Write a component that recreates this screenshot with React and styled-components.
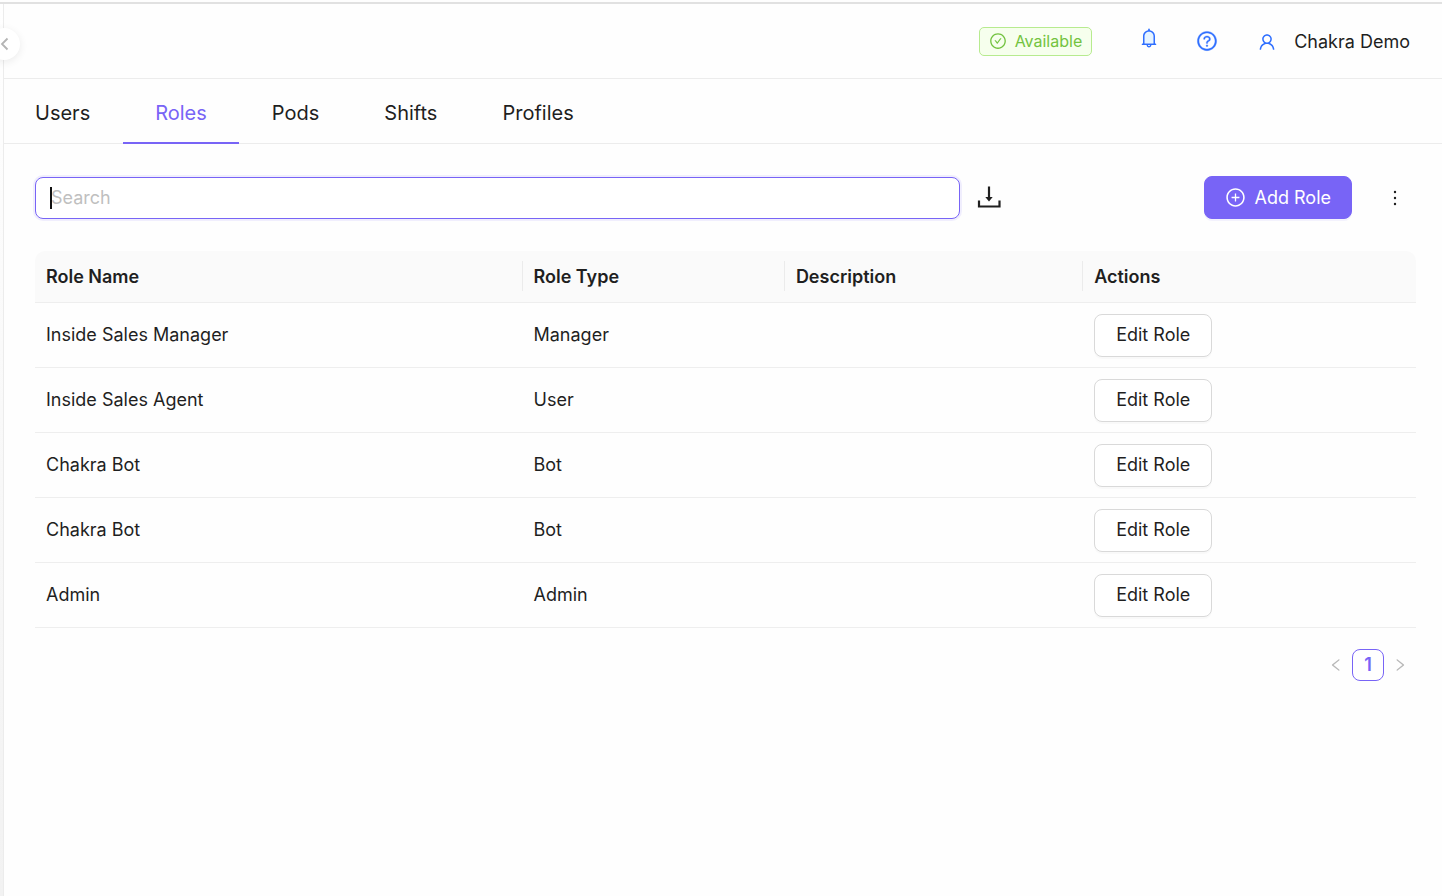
import React, { useState } from 'react';
import styled, { createGlobalStyle } from 'styled-components';
import {
  AiOutlineCheckCircle,
  AiOutlineLeft,
  AiOutlineMore,
  AiOutlinePlusCircle,
  AiOutlineQuestionCircle,
  AiOutlineRight,
  AiOutlineUser,
} from 'react-icons/ai';

const GlobalStyle = createGlobalStyle`
  *, *::before, *::after {
    box-sizing: border-box;
  }
  body {
    margin: 0;
    padding-top: 2px;
    background: #fefefe;
    color: #1f1f1f;
    font-family: Inter, "Liberation Sans", sans-serif;
    font-size: 18px;
    line-height: 28px;
  }
  button, input {
    font: inherit;
    color: inherit;
  }
  svg {
    display: block;
    flex: none;
  }
`;

const Shell = styled.div`
  display: flex;
  min-height: calc(100vh - 2px);
  border-top: 2px solid #e1e1e1;
  position: relative;
`;

const SideEdge = styled.aside`
  width: 4px;
  flex: none;
  border-right: 1px solid #ececec;
  background: linear-gradient(#ffffff, #f2f2f2);
`;

const CollapseButton = styled.button`
  position: absolute;
  top: 24px;
  left: -12px;
  width: 32px;
  height: 32px;
  padding: 0;
  border: none;
  border-radius: 50%;
  background: #ffffff;
  color: #b4b4b4;
  box-shadow: 0 2px 8px rgba(0, 0, 0, 0.08);
  display: flex;
  align-items: center;
  justify-content: center;
  cursor: pointer;
`;

const Main = styled.main`
  flex: 1;
  min-width: 0;
`;

const TopBar = styled.header`
  height: 75px;
  padding: 0 32px;
  border-bottom: 1px solid #ececec;
  display: flex;
  align-items: center;
  justify-content: flex-end;
`;

const StatusTag = styled.span`
  height: 29px;
  padding: 0 9px;
  margin-right: 46px;
  border: 1px solid #b7eb8f;
  border-radius: 5px;
  background: #f6ffed;
  color: #73c340;
  font-size: 16px;
  display: flex;
  align-items: center;
  gap: 8px;
`;

const IconButton = styled.button`
  padding: 0;
  margin-right: ${(props) => props.$gap || 0}px;
  border: none;
  background: none;
  color: ${(props) => props.$color || '#1f1f1f'};
  display: flex;
  align-items: center;
  cursor: pointer;
`;

const BellButton = styled(IconButton)`
  padding-bottom: 6px;
`;

const MoreButton = styled(IconButton)`
  margin: 0 10px 0 32px;
`;

const Account = styled.button`
  padding: 2px 0 0;
  border: none;
  background: none;
  display: flex;
  align-items: center;
  gap: 17px;
  cursor: pointer;

  svg {
    color: #2f6fff;
  }
`;

const Tabs = styled.nav`
  height: 65px;
  margin-left: -1px;
  border-bottom: 1px solid #ececec;
  display: flex;
  gap: 1px;
`;

const Tab = styled.button`
  height: 65px;
  padding: 4px 32px 0;
  border: none;
  border-bottom: 2px solid ${(props) => (props.$active ? '#7864f6' : 'transparent')};
  background: none;
  color: ${(props) => (props.$active ? '#7864f6' : '#1f1f1f')};
  font-size: 20px;
  cursor: pointer;
`;

const Content = styled.section`
  padding: 32px 26px 32px 31px;
`;

const Toolbar = styled.div`
  display: flex;
  align-items: center;
  margin-bottom: 32px;
`;

const SearchField = styled.label`
  position: relative;
  width: 67%;
  margin-right: 17px;
  display: flex;
`;

const SearchInput = styled.input`
  width: 100%;
  height: 42px;
  padding: 0 15px;
  border: 1px solid #7864f6;
  border-radius: 8px;
  outline: none;
  background: #ffffff;
  box-shadow: 0 0 0 2px rgba(120, 100, 246, 0.1);
  caret-color: transparent;

  &::placeholder {
    color: #bfbfbf;
    opacity: 1;
  }
`;

const Caret = styled.span`
  position: absolute;
  top: 10px;
  left: 15px;
  width: 2px;
  height: 22px;
  background: #111111;
`;

const Spacer = styled.div`
  flex: 1;
`;

const Button = styled.button`
  height: 43px;
  padding: 0 ${(props) => (props.$primary ? 20 : 21)}px;
  border: 1px solid ${(props) => (props.$primary ? '#7864f6' : '#d9d9d9')};
  border-radius: 8px;
  background: ${(props) => (props.$primary ? '#7864f6' : '#ffffff')};
  color: ${(props) => (props.$primary ? '#ffffff' : '#1f1f1f')};
  box-shadow: 0 2px 0 ${(props) => (props.$primary ? 'rgba(120, 100, 246, 0.08)' : 'rgba(0, 0, 0, 0.02)')};
  white-space: nowrap;
  display: inline-flex;
  align-items: center;
  gap: 9px;
  vertical-align: top;
  cursor: pointer;
`;

const Table = styled.table`
  width: 100%;
  table-layout: fixed;
  border-collapse: separate;
  border-spacing: 0;
`;

const HeadCell = styled.th`
  position: relative;
  width: ${(props) => props.$width};
  height: 52px;
  padding: 0 11px;
  border-bottom: 1px solid #eeeeee;
  background: #fafafa;
  font-weight: 600;
  text-align: left;

  &:first-child {
    border-top-left-radius: 10px;
  }
  &:last-child {
    border-top-right-radius: 10px;
  }
  &:not(:last-child)::after {
    content: '';
    position: absolute;
    top: 10px;
    right: 0;
    width: 1px;
    height: 30px;
    background: #ebebeb;
  }
`;

const Cell = styled.td`
  height: 65px;
  padding: 0 11px;
  border-bottom: 1px solid #eeeeee;
`;

const Pagination = styled.nav`
  margin-top: 21px;
  padding-right: 8px;
  display: flex;
  align-items: center;
  justify-content: flex-end;
  gap: 8px;
`;

const PageNumber = styled.button`
  width: 32px;
  height: 32px;
  padding: 0;
  border: 1px solid #7864f6;
  border-radius: 8px;
  background: #ffffff;
  color: #7864f6;
  font-weight: 600;
  cursor: pointer;
`;

const BellIcon = () => (
  <svg width="22" height="22" viewBox="0 0 1024 1024" fill="currentColor" aria-hidden="true">
    <path fill="#e6f4ff" d="M512 220c-55.600 0-107.800 21.600-147.100 60.900S304 372.400 304 428v340h416V428c0-55.600-21.600-107.800-60.900-147.100S567.600 220 512 220z" />
    <path d="M816 768h-24V428c0-141.100-104.300-257.800-240-277.200V112c0-22.100-17.900-40-40-40s-40 17.900-40 40v38.800C336.300 170.200 232 286.900 232 428v340h-24c-17.700 0-32 14.300-32 32v32c0 4.400 3.600 8 8 8h216c0 61.800 50.200 112 112 112s112-50.200 112-112h216c4.400 0 8-3.600 8-8v-32c0-17.700-14.300-32-32-32zM512 888c-26.500 0-48-21.500-48-48h96c0 26.500-21.500 48-48 48zM304 768V428c0-55.600 21.600-107.800 60.900-147.100S456.400 220 512 220s107.800 21.600 147.100 60.900S720 372.400 720 428v340H304z" />
  </svg>
);

const DownloadIcon = () => (
  <svg width="24" height="24" viewBox="0 0 24 24" fill="none" stroke="currentColor" aria-hidden="true">
    <path strokeWidth="2.200" d="M2 14.500v6h20.500v-6" />
    <path strokeWidth="2.200" d="M12 0.500v12" />
    <path fill="currentColor" stroke="none" d="M8.300 11h7.400L12 15.500z" />
  </svg>
);

const CollapseIcon = () => (
  <svg width="12" height="14" viewBox="0 0 12 14" fill="none" stroke="currentColor" aria-hidden="true">
    <path strokeWidth="1.800" d="M9.500 1.500L4 7l5.500 5.500" />
  </svg>
);

const tabs = ['Users', 'Roles', 'Pods', 'Shifts', 'Profiles'];

const columns = [
  { title: 'Role Name', width: '35.300%' },
  { title: 'Role Type', width: '19%' },
  { title: 'Description', width: '21.600%' },
  { title: 'Actions', width: '24.100%' },
];

const roles = [
  { id: 1, name: 'Inside Sales Manager', type: 'Manager', description: '' },
  { id: 2, name: 'Inside Sales Agent', type: 'User', description: '' },
  { id: 3, name: 'Chakra Bot', type: 'Bot', description: '' },
  { id: 4, name: 'Chakra Bot', type: 'Bot', description: '' },
  { id: 5, name: 'Admin', type: 'Admin', description: '' },
];

const App = () => {
  const [activeTab, setActiveTab] = useState('Roles');
  const [search, setSearch] = useState('');
  const visibleRoles = roles.filter((role) => role.name.toLowerCase().includes(search.toLowerCase()));

  return (
    <React.Fragment>
      <GlobalStyle />
      <Shell>
        <SideEdge />
        <Main>
          <TopBar>
            <StatusTag>
              <AiOutlineCheckCircle size={18} />
              Available
            </StatusTag>
            <BellButton $color="#2f6fff" $gap={36} aria-label="Notifications">
              <BellIcon />
            </BellButton>
            <IconButton $color="#2f6fff" $gap={39} aria-label="Help">
              <AiOutlineQuestionCircle size={22} strokeWidth={16} />
            </IconButton>
            <Account>
              <AiOutlineUser size={20} />
              Chakra Demo
            </Account>
          </TopBar>
          <Tabs>
            {tabs.map((tab) => (
              <Tab key={tab} $active={tab === activeTab} onClick={() => setActiveTab(tab)}>
                {tab}
              </Tab>
            ))}
          </Tabs>
          <Content>
            <Toolbar>
              <SearchField>
                <SearchInput
                  aria-label="Search"
                  placeholder="Search"
                  value={search}
                  onChange={(e) => setSearch(e.target.value)}
                />
                {!search && <Caret />}
              </SearchField>
              <IconButton aria-label="Download">
                <DownloadIcon />
              </IconButton>
              <Spacer />
              <Button $primary>
                <AiOutlinePlusCircle size={21} />
                Add Role
              </Button>
              <MoreButton aria-label="More">
                <AiOutlineMore size={22} />
              </MoreButton>
            </Toolbar>
            <Table>
              <thead>
                <tr>
                  {columns.map((column) => (
                    <HeadCell key={column.title} $width={column.width}>
                      {column.title}
                    </HeadCell>
                  ))}
                </tr>
              </thead>
              <tbody>
                {visibleRoles.map((role) => (
                  <tr key={role.id}>
                    <Cell>{role.name}</Cell>
                    <Cell>{role.type}</Cell>
                    <Cell>{role.description}</Cell>
                    <Cell>
                      <Button>Edit Role</Button>
                    </Cell>
                  </tr>
                ))}
              </tbody>
            </Table>
            <Pagination aria-label="Pages">
              <IconButton $color="#b8b8b8" aria-label="Previous page">
                <AiOutlineLeft size={16} />
              </IconButton>
              <PageNumber>1</PageNumber>
              <IconButton $color="#b8b8b8" aria-label="Next page">
                <AiOutlineRight size={16} />
              </IconButton>
            </Pagination>
          </Content>
        </Main>
        <CollapseButton aria-label="Collapse menu">
          <CollapseIcon />
        </CollapseButton>
      </Shell>
    </React.Fragment>
  );
};

export default App;
